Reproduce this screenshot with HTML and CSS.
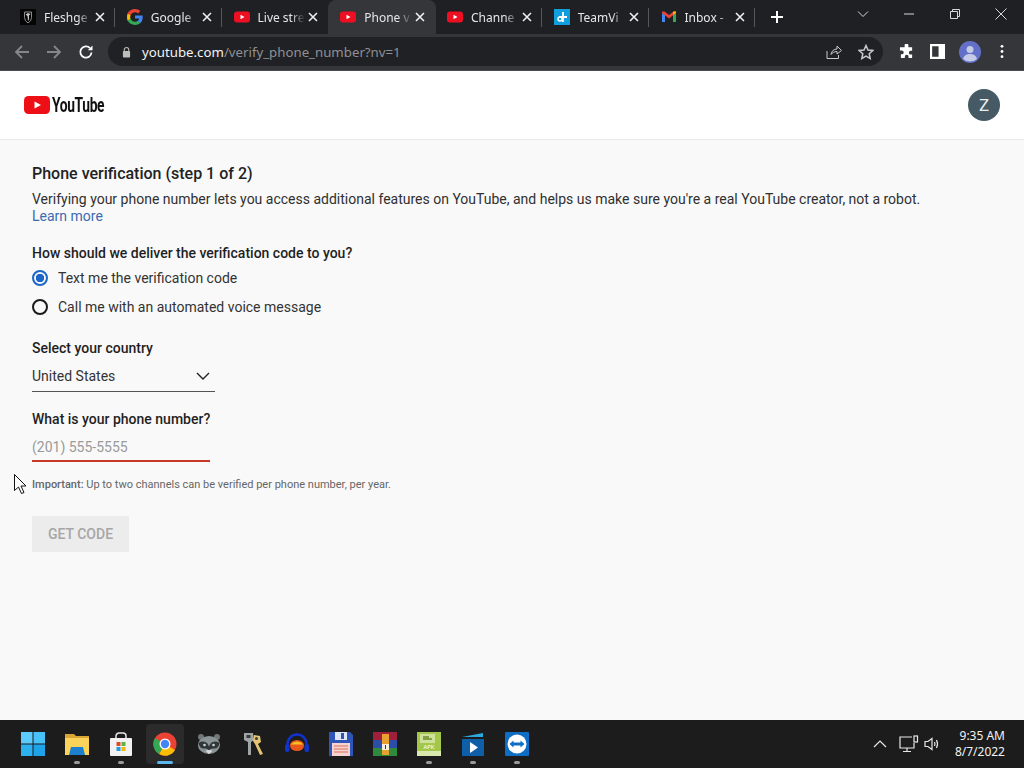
FILE: index.html
```html
<!DOCTYPE html>
<html lang="en">
<head>
    <meta charset="UTF-8">
    <meta name="viewport" content="width=device-width, initial-scale=1.0">
    <title>Phone verification</title>
    <link rel="stylesheet" href="styles.css">
</head>
<body>
    <div class="tabstrip">
        <div class="tab">
            <svg class="favicon" viewBox="0 0 16 16"><rect width="16" height="16" fill="#050505"/><path d="M4.500 3h7v5.500q0 3.500-3.500 5.500-3.500-2-3.500-5.500z" fill="none" stroke="#8d8d8d" stroke-width="1"/><path d="M8 4l2.500 1L9 6.500v4l-1 1.500-.5-5-2-1.500z" fill="#c4c4c4"/></svg>
            <span class="tab-title">Fleshge</span>
            <svg class="tab-close" viewBox="0 0 10 10"><path d="M1 1l8 8M9 1l-8 8"/></svg>
        </div>
        <div class="tab">
            <svg class="favicon" viewBox="0 0 16 16"><path d="M15.700 8.200c0-.6-.1-1.100-.2-1.600H8v3h4.300c-.2 1-.8 1.800-1.600 2.400v2h2.600c1.500-1.400 2.400-3.400 2.400-5.800z" fill="#4285f4"/><path d="M8 16c2.200 0 4-.7 5.300-2l-2.600-2c-.7.5-1.600.8-2.700.8-2.100 0-3.900-1.400-4.500-3.300H.6v2.100C1.900 14.200 4.700 16 8 16z" fill="#34a853"/><path d="M3.500 9.500c-.2-.5-.3-1-.3-1.500s.1-1 .3-1.500V4.400H.6C.2 5.500 0 6.700 0 8s.2 2.500.6 3.600z" fill="#fbbc05"/><path d="M8 3.200c1.200 0 2.300.4 3.100 1.200l2.300-2.300C12 .8 10.200 0 8 0 4.700 0 1.900 1.800.6 4.400l2.900 2.100C4.100 4.600 5.900 3.200 8 3.200z" fill="#ea4335"/></svg>
            <span class="tab-title">Google</span>
            <svg class="tab-close" viewBox="0 0 10 10"><path d="M1 1l8 8M9 1l-8 8"/></svg>
        </div>
        <div class="tab tab-noline">
            <svg class="favicon" viewBox="0 0 16 16"><rect x="0" y="2.500" width="16" height="11" rx="3" fill="#ee0f22"/><path d="M6.500 5.800l4 2.200-4 2.200z" fill="#fff"/></svg>
            <span class="tab-title">Live stre</span>
            <svg class="tab-close" viewBox="0 0 10 10"><path d="M1 1l8 8M9 1l-8 8"/></svg>
        </div>
        <div class="tab tab-active">
            <svg class="favicon" viewBox="0 0 16 16"><rect x="0" y="2.500" width="16" height="11" rx="3" fill="#ee0f22"/><path d="M6.500 5.800l4 2.200-4 2.200z" fill="#fff"/></svg>
            <span class="tab-title">Phone v</span>
            <svg class="tab-close" viewBox="0 0 10 10"><path d="M1 1l8 8M9 1l-8 8"/></svg>
        </div>
        <div class="tab">
            <svg class="favicon" viewBox="0 0 16 16"><rect x="0" y="2.500" width="16" height="11" rx="3" fill="#ee0f22"/><path d="M6.500 5.800l4 2.200-4 2.200z" fill="#fff"/></svg>
            <span class="tab-title">Channe</span>
            <svg class="tab-close" viewBox="0 0 10 10"><path d="M1 1l8 8M9 1l-8 8"/></svg>
        </div>
        <div class="tab">
            <svg class="favicon" viewBox="0 0 16 16"><rect width="16" height="16" fill="#109fdc"/><path d="M9 3v10M5 8h8" stroke="#fff" stroke-width="1.800"/><circle cx="6" cy="10" r="2" fill="none" stroke="#fff" stroke-width="1.400"/></svg>
            <span class="tab-title">TeamVi</span>
            <svg class="tab-close" viewBox="0 0 10 10"><path d="M1 1l8 8M9 1l-8 8"/></svg>
        </div>
        <div class="tab">
            <svg class="favicon" viewBox="0 0 16 16"><path d="M1 13V4l3 2v7z" fill="#4285f4"/><path d="M12 13V6l3-2v9z" fill="#34a853"/><path d="M1 4l7 5.500 7-5.500v-1.500h-2.500L8 6 3.500 2.500H1z" fill="#ea4335"/><path d="M12 6l3-2V2.500h-2.500L12 3z" fill="#fbbc05"/></svg>
            <span class="tab-title">Inbox -</span>
            <svg class="tab-close" viewBox="0 0 10 10"><path d="M1 1l8 8M9 1l-8 8"/></svg>
        </div>
        <svg class="newtab" viewBox="0 0 12 12"><path d="M6 0v12M0 6h12"/></svg>
        <div class="window-btns">
            <svg class="win-icon" viewBox="0 0 12 12"><path d="M1 3.500l5 5 5-5"/></svg>
            <svg class="win-icon" viewBox="0 0 12 12"><path d="M1 6h10"/></svg>
            <svg class="win-icon" viewBox="0 0 12 12"><path d="M1.500 3.500h7v7h-7zM3.500 3.500v-2h7v7h-2"/></svg>
            <svg class="win-icon" viewBox="0 0 12 12"><path d="M.5.500l11 11M11.500.500l-11 11"/></svg>
        </div>
    </div>

    <div class="toolbar">
        <svg class="nav-icon nav-dim" viewBox="0 0 16 16"><path d="M15 8H2M8 2L2 8l6 6"/></svg>
        <svg class="nav-icon nav-dim" viewBox="0 0 16 16"><path d="M1 8h13M8 2l6 6-6 6"/></svg>
        <svg class="nav-icon" viewBox="0 0 16 16"><path d="M13.500 8.500a5.600 5.600 0 1 1-1.500-4.300"/><path d="M14.500 1.500v4.700H9.800z" fill="#fff" stroke="none"/></svg>
        <div class="omnibox">
            <svg class="lock" viewBox="0 0 10 12"><path d="M2.500 5V3.500a2.500 2.500 0 0 1 5 0V5" fill="none" stroke="#bdbdbd" stroke-width="1.200"/><rect x="1" y="5" width="8" height="7" rx="1" fill="#bdbdbd"/></svg>
            <span class="url">youtube.com<span class="url-path">/verify_phone_number?nv=1</span></span>
            <svg class="omni-icon" viewBox="0 0 16 16"><path d="M1 7v7.500h11.500V11M5 10.500C5.500 7 8 5 11 5V2l4.500 4.500L11 10V7.500c-2.500 0-4.500 1-6 3z"/></svg>
            <svg class="omni-icon" viewBox="0 0 16 16"><path d="M8 1.500l2 4.500 4.800.5-3.600 3.200 1 4.800L8 12l-4.200 2.500 1-4.800L1.200 6.500 6 6z" stroke-width="1.500"/></svg>
        </div>
        <svg class="tool-icon" viewBox="0 0 16 16"><path d="M6 1.500a2 2 0 0 1 4 0V3.500h4v3.800h-1.500a2 2 0 0 0 0 4H14V15h-3.800v-1.500a2 2 0 0 0-4 0V15H2v-4h1a2 2 0 0 0 0-4H1V3.500h5z" fill="#fff"/></svg>
        <svg class="tool-icon" viewBox="0 0 14 14"><path d="M0 0h14v14H0zM2 2v10h6V2z" fill="#fff" fill-rule="evenodd"/></svg>
        <svg class="profile" viewBox="0 0 22 22"><circle cx="11" cy="11" r="11" fill="#6270c8"/><circle cx="11" cy="8.500" r="3.500" fill="#c5cae9"/><path d="M4 18c1-4 4-5 7-5s6 1 7 5a11 11 0 0 1-14 0z" fill="#c5cae9"/></svg>
        <svg class="tool-icon dots" viewBox="0 0 4 16"><circle cx="2" cy="2.500" r="1.500" fill="#fff"/><circle cx="2" cy="8" r="1.500" fill="#fff"/><circle cx="2" cy="13.500" r="1.500" fill="#fff"/></svg>
    </div>

    <header class="page-header">
        <div class="logo">
            <svg class="logo-mark" viewBox="0 0 26 18"><rect width="26" height="18" rx="4.500" fill="#ee0f16"/><path d="M10.500 5.500l6.500 3.500-6.500 3.500z" fill="#fff"/></svg>
            <span class="logo-text">YouTube</span>
        </div>
        <div class="avatar">Z</div>
    </header>

    <main class="page">
        <h1 class="title">Phone verification (step 1 of 2)</h1>
        <p class="intro">Verifying your phone number lets you access additional features on YouTube, and helps us make sure you're a real YouTube creator, not a robot.<br><a class="learn" href="#">Learn more</a></p>

        <div class="label label-deliver">How should we deliver the verification code to you?</div>
        <div class="radio-group">
            <div class="radio-row">
                <span class="radio radio-on"></span>
                <span>Text me the verification code</span>
            </div>
            <div class="radio-row">
                <span class="radio"></span>
                <span>Call me with an automated voice message</span>
            </div>
        </div>

        <div class="label label-country">Select your country</div>
        <div class="select">
            <span>United States</span>
            <svg class="select-arrow" viewBox="0 0 14 8"><path d="M1 1l6 6 6-6"/></svg>
        </div>

        <div class="label label-phone">What is your phone number?</div>
        <div class="phone-input">(201) 555-5555</div>

        <p class="note"><b>Important:</b> Up to two channels can be verified per phone number, per year.</p>
        <button class="get-code" disabled>GET CODE</button>
        <svg class="cursor" viewBox="0 0 12 20"><path d="M.5.500v16l4-3.500 3 6.500 2.500-1-3-6.500h5z" fill="#fff" stroke="#111" stroke-width="1"/></svg>
    </main>

    <footer class="taskbar">
        <div class="task-app">
            <svg class="task-icon" viewBox="0 0 24 24"><rect x="0" y="0" width="11.500" height="11.500" fill="#5ccbfb"/><rect x="12.500" y="0" width="11.500" height="11.500" fill="#48c0f8"/><rect x="0" y="12.500" width="11.500" height="11.500" fill="#2cb0f0"/><rect x="12.500" y="12.500" width="11.500" height="11.500" fill="#1ea2e8"/></svg>
        </div>
        <div class="task-app task-open">
            <svg class="task-icon" viewBox="0 0 24 24"><path d="M0 2h9l2 2h13v19H0z" fill="#d9a534"/><path d="M0 6h24v17H0z" fill="#fbd35a"/><path d="M6 15h12l2 8H4z" fill="#1b80d0"/></svg>
        </div>
        <div class="task-app task-open">
            <svg class="task-icon" viewBox="0 0 24 24"><path d="M7 7V4a3 3 0 0 1 3-3h4a3 3 0 0 1 3 3v3" fill="none" stroke="#e8e8e8" stroke-width="1.500"/><rect x="1" y="6" width="22" height="18" rx="1" fill="#f2f2f2"/><rect x="7.500" y="10" width="4" height="4" fill="#e2492b"/><rect x="12.500" y="10" width="4" height="4" fill="#5fb43c"/><rect x="7.500" y="15" width="4" height="4" fill="#1f9be0"/><rect x="12.500" y="15" width="4" height="4" fill="#f5b50f"/></svg>
        </div>
        <div class="task-app task-active">
            <svg class="task-icon" viewBox="0 0 24 24"><circle cx="12" cy="12" r="11.500" fill="#ea4335"/><path d="M12 12L22 18A11.500 11.500 0 0 1 6 22z" fill="#fbbc05"/><path d="M12 12L6 22A11.500 11.500 0 0 1 2 6z" fill="#34a853"/><circle cx="12" cy="12" r="5.500" fill="#fff"/><circle cx="12" cy="12" r="4.200" fill="#4285f4"/></svg>
        </div>
        <div class="task-app">
            <svg class="task-icon" viewBox="0 0 24 24"><circle cx="4" cy="5" r="3" fill="#6f7778"/><circle cx="20" cy="5" r="3" fill="#6f7778"/><ellipse cx="12" cy="13" rx="11" ry="9" fill="#8b9495"/><path d="M1.500 11q5-3 9 .5l1.500 3 1.500-3q4-3.500 9-.5-1 6-6 5.500-3-.5-4.500 2-1.500-2.500-4.500-2-5 .5-6-5.500z" fill="#30363a"/><circle cx="7.500" cy="13" r="1.300" fill="#cfd6d8"/><circle cx="16.500" cy="13" r="1.300" fill="#cfd6d8"/><path d="M8.500 19q3.500-2 7 0l-3.500 3z" fill="#d6dadb"/></svg>
        </div>
        <div class="task-app">
            <svg class="task-icon" viewBox="0 0 24 24"><path d="M3 1h9l1 7-3 2v13H7V10L3 8z" fill="#9fa5a6"/><rect x="5.500" y="3" width="4" height="3" fill="#3a3a3a"/><path d="M13 3l6 1 1 6-3 2 5 10-3 1-5-11-2-3z" fill="#e4c472"/><circle cx="15.500" cy="6.500" r="1.500" fill="#3a3a3a"/></svg>
        </div>
        <div class="task-app">
            <svg class="task-icon" viewBox="0 0 24 24"><path d="M2.500 16v-4a9.500 9.500 0 0 1 19 0v4" fill="none" stroke="#1133cc" stroke-width="2.500"/><rect x="0" y="12" width="4.500" height="8" rx="2" fill="#1133cc"/><rect x="19.500" y="12" width="4.500" height="8" rx="2" fill="#1133cc"/><ellipse cx="12" cy="13.500" rx="7" ry="5.500" fill="#e8581c"/><path d="M5.500 12.500q6.500-6 13 0z" fill="#f5c020"/></svg>
        </div>
        <div class="task-app">
            <svg class="task-icon" viewBox="0 0 24 24"><path d="M0 0h21l3 3v21H0z" fill="#2f55b8"/><rect x="6" y="0" width="12" height="8" fill="#dfe6f5"/><rect x="12" y="1" width="3" height="6" fill="#2f55b8"/><rect x="3" y="11" width="18" height="13" fill="#f4d4d0"/><path d="M5 14h14M5 17h14M5 20h14" stroke="#e0705f" stroke-width="1"/></svg>
        </div>
        <div class="task-app">
            <svg class="task-icon" viewBox="0 0 24 24"><rect x="0" y="0" width="24" height="8" fill="#a0203c"/><rect x="0" y="8" width="24" height="8" fill="#2c4ea8"/><rect x="0" y="16" width="24" height="8" fill="#2f8a3c"/><rect x="9" y="2" width="7" height="21" fill="#e8a030"/><rect x="9" y="12" width="7" height="6" fill="#f5f0e0"/><path d="M12.500 13v4" stroke="#603010" stroke-width="1"/></svg>
        </div>
        <div class="task-app task-open">
            <svg class="task-icon" viewBox="0 0 24 24"><rect width="24" height="24" fill="#a2c74b"/><rect x="3" y="2" width="15" height="9" fill="#cfe09a"/><path d="M6 7h9M6 5h6" stroke="#6c8a2a" stroke-width="1.500"/><rect x="0" y="19" width="24" height="5" fill="#d8e8ae"/><text class="apk" x="12" y="17" text-anchor="middle">APK</text></svg>
        </div>
        <div class="task-app task-open">
            <svg class="task-icon" viewBox="0 0 24 24"><path d="M1 5l21-4v4z" fill="#2aa8e0"/><rect x="1" y="7" width="22" height="17" fill="#0f5fa8"/><path d="M9 10l8 5.500-8 5.500z" fill="#fff"/></svg>
        </div>
        <div class="task-app task-open">
            <svg class="task-icon" viewBox="0 0 24 24"><rect width="24" height="24" rx="1" fill="#0e6ec4"/><circle cx="12" cy="12" r="9.500" fill="#fff"/><path d="M4.500 12l4-3.500v2h7v-2l4 3.500-4 3.500v-2h-7v2z" fill="#0e6ec4"/></svg>
        </div>
        <div class="tray">
            <svg class="tray-icon tray-caret" viewBox="0 0 14 8"><path d="M1 7l6-6 6 6"/></svg>
            <svg class="tray-icon tray-net" viewBox="0 0 20 18"><path d="M13 2H1v11h14V8M8 13v3M4 16.500h8"/><rect x="15" y="1" width="3.500" height="6"/></svg>
            <svg class="tray-icon tray-vol" viewBox="0 0 16 14"><path d="M1 4.500h3L8 1.500v11l-4-3H1zM10.500 5q1 2 0 4M12.500 3q2 4 0 8"/></svg>
            <div class="clock">
                <div>9:35 AM</div>
                <div>8/7/2022</div>
            </div>
        </div>
    </footer>
</body>
</html>
```

FILE: styles.css
```css
html, body {
    margin: 0;
    padding: 0;
}
body {
    width: 1024px;
    height: 768px;
    overflow: hidden;
    display: flex;
    flex-direction: column;
    background-color: #f9f9f9;
    font-family: Roboto, "Liberation Sans", sans-serif;
    font-size: 14px;
    color: #1f1f1f;
}

/* browser tabs */
.tabstrip {
    height: 34px;
    flex: none;
    display: flex;
    align-items: flex-end;
    padding-left: 8px;
    background-color: #1f2024;
    font-family: "Noto Sans", sans-serif;
    font-size: 12px;
    color: #e6e7e9;
}
.tab {
    width: 106.75px;
    height: 34px;
    flex: none;
    box-sizing: border-box;
    display: flex;
    align-items: center;
    padding: 0 10px 0 12px;
    position: relative;
    border-top-left-radius: 8px;
    border-top-right-radius: 8px;
}
.tab::after {
    content: "";
    position: absolute;
    right: 0;
    top: 8px;
    height: 19px;
    width: 1px;
    background-color: #55565a;
}
.tab-noline::after, .tab-active::after {
    display: none;
}
.tab-active {
    background-color: #35363a;
    box-shadow: 1px 0 0 #35363a;
}
.favicon {
    width: 16px;
    height: 16px;
    flex: none;
}
.tab-title {
    width: 48px;
    margin-left: 8px;
    white-space: nowrap;
    -webkit-mask-image: linear-gradient(to right, #000 70%, transparent 100%);
    mask-image: linear-gradient(to right, #000 70%, transparent 100%);
}
.tab-close {
    width: 10px;
    height: 10px;
    margin-left: 3px;
    fill: none;
    stroke: #f0f0f0;
    stroke-width: 1.600;
}
.newtab {
    width: 12px;
    height: 12px;
    margin: 0 0 11px 16px;
    fill: none;
    stroke: #fff;
    stroke-width: 2;
}
.window-btns {
    margin-left: auto;
    align-self: flex-start;
    display: flex;
    gap: 34px;
    padding: 8px 17px 0 0;
}
.win-icon {
    width: 12px;
    height: 12px;
    fill: none;
    stroke: #d8d8d8;
    stroke-width: 1;
}

/* address bar row */
.toolbar {
    height: 37px;
    flex: none;
    box-sizing: border-box;
    display: flex;
    align-items: center;
    padding: 0 14px 1px 14px;
    background-color: #35363a;
    border-bottom: 1px solid #4a4b4e;
}
.nav-icon {
    width: 16px;
    height: 16px;
    margin-right: 16px;
    fill: none;
    stroke: #fff;
    stroke-width: 1.800;
}
.nav-dim {
    stroke: #85868a;
}
.omnibox {
    width: 775px;
    height: 29px;
    flex: none;
    box-sizing: border-box;
    margin-left: -2px;
    padding: 0 9px 0 14px;
    display: flex;
    align-items: center;
    border-radius: 15px;
    background-color: #202124;
    font-family: "Noto Sans", sans-serif;
    font-size: 13.25px;
    color: #f1f3f4;
}
.lock {
    width: 9px;
    height: 12px;
    margin-right: 11px;
}
.url {
    flex: 1;
    white-space: nowrap;
}
.url-path {
    color: #8f9094;
}
.omni-icon {
    width: 16px;
    height: 16px;
    margin-left: 16px;
    fill: none;
    stroke: #c8c9cb;
    stroke-width: 1;
}
.tool-icon {
    width: 15px;
    height: 15px;
    flex: none;
    margin-left: 16px;
}
.profile {
    width: 22px;
    height: 22px;
    flex: none;
    margin: 0 0 0 14px;
}
.dots {
    width: 4px;
    margin-left: 19px;
}

/* youtube header */
.page-header {
    height: 69px;
    flex: none;
    box-sizing: border-box;
    display: flex;
    align-items: center;
    justify-content: space-between;
    padding: 0 24px;
    background-color: #fff;
    border-bottom: 1px solid #e8e8e8;
}
.logo {
    display: flex;
    align-items: center;
}
.logo-mark {
    width: 26px;
    height: 18px;
}
.logo-text {
    display: inline-block;
    width: 52px;
    margin-left: 2px;
    font-size: 20px;
    font-weight: 700;
    letter-spacing: -.5px;
    color: #111;
    transform: scaleX(.69);
    transform-origin: left center;
}
.avatar {
    width: 32px;
    height: 32px;
    border-radius: 50%;
    background-color: #455a64;
    color: #eceff1;
    font-size: 17px;
    line-height: 32px;
    text-align: center;
}

/* form */
.page {
    flex: 1;
    padding: 24px 0 0 32px;
    position: relative;
}
.title {
    margin: 0;
    font-size: 16px;
    font-weight: 500;
    line-height: 20px;
    color: #222;
}
.intro {
    margin: 7px 0 0;
    line-height: 17px;
    color: #303030;
}
.learn {
    color: #3d6ab0;
    text-decoration: none;
}
.label {
    font-weight: 500;
    line-height: 18px;
    color: #1f1f1f;
}
.label-deliver {
    margin-top: 19px;
}
.radio-group {
    margin-top: 1px;
}
.radio-row {
    display: flex;
    align-items: center;
    height: 29px;
    color: #333;
}
.radio {
    width: 16px;
    height: 16px;
    box-sizing: border-box;
    margin-right: 10px;
    border: 2px solid #1a1a1a;
    border-radius: 50%;
}
.radio-on {
    border-color: #1a66c9;
    background: radial-gradient(circle, #1a66c9 0 4px, transparent 4.500px);
}
.label-country {
    margin-top: 18px;
}
.select {
    width: 183px;
    height: 32px;
    box-sizing: border-box;
    margin-top: 3px;
    padding-right: 5px;
    display: flex;
    align-items: center;
    justify-content: space-between;
    border-bottom: 1px solid #555;
    color: #333;
}
.select-arrow {
    width: 14px;
    height: 8px;
    fill: none;
    stroke: #222;
    stroke-width: 1.400;
}
.label-phone {
    margin-top: 18px;
}
.phone-input {
    width: 178px;
    height: 31px;
    box-sizing: border-box;
    margin-top: 3px;
    padding-top: 8px;
    line-height: 17px;
    border-bottom: 2px solid #c53a26;
    color: #9a9a9a;
}
.note {
    margin: 16px 0 0;
    font-size: 11px;
    line-height: 14px;
    color: #666;
}
.note b {
    font-weight: 500;
}
.get-code {
    display: block;
    width: 97px;
    height: 36px;
    margin-top: 24px;
    padding: 0;
    border: 0;
    background-color: #ececec;
    font-family: Roboto, sans-serif;
    font-size: 14px;
    font-weight: 500;
    color: #a6a6a6;
}
.cursor {
    position: absolute;
    left: 14px;
    top: 334px;
    width: 12px;
    height: 20px;
}

/* windows taskbar */
.taskbar {
    height: 48px;
    flex: none;
    box-sizing: border-box;
    display: flex;
    align-items: center;
    padding-left: 11px;
    background-color: #1c1c1c;
}
.task-app {
    width: 44px;
    height: 40px;
    flex: none;
    display: flex;
    align-items: center;
    justify-content: center;
    position: relative;
}
.task-icon {
    width: 24px;
    height: 24px;
}
.task-open::after, .task-active::after {
    content: "";
    position: absolute;
    left: 19px;
    bottom: 0;
    width: 6px;
    height: 3px;
    border-radius: 2px;
    background-color: #9a9a9a;
}
.task-active {
    width: 38px;
    margin: 0 3px;
    border-radius: 4px;
    background-color: #2b2b2b;
}
.task-active::after {
    left: 11px;
    width: 16px;
    background-color: #5bb8ee;
}
.apk {
    font-family: "Noto Sans", sans-serif;
    font-size: 6px;
    fill: #fff;
}
.tray {
    margin-left: auto;
    display: flex;
    align-items: center;
    padding-right: 19px;
}
.tray-icon {
    fill: none;
    stroke: #e8e8e8;
    stroke-width: 1.200;
}
.tray-caret {
    width: 14px;
    height: 8px;
    margin-right: 12px;
}
.tray-net {
    width: 20px;
    height: 18px;
    margin-right: 5px;
}
.tray-vol {
    width: 16px;
    height: 14px;
    margin-right: 15px;
}
.clock {
    font-family: "Noto Sans", sans-serif;
    font-size: 12px;
    line-height: 16px;
    text-align: right;
    color: #f2f2f2;
}
```
